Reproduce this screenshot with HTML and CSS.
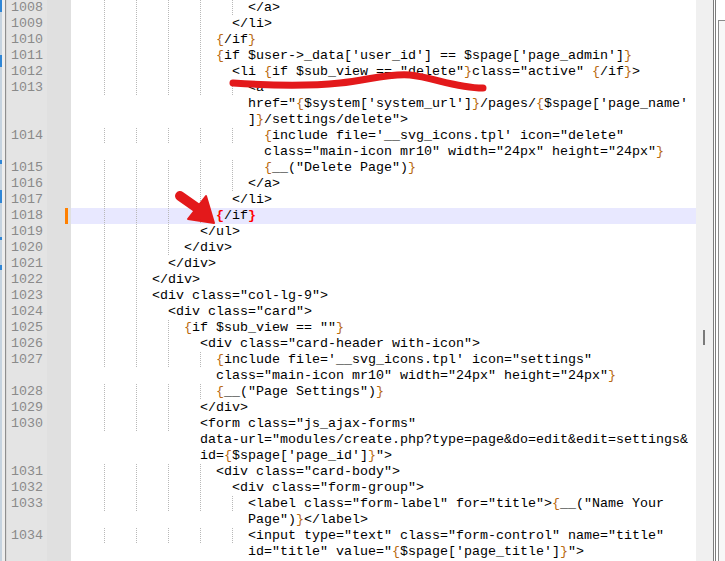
FILE: index.html
```html
<!DOCTYPE html>
<html lang="en">
<head>
    <meta charset="UTF-8">
    <title>page.tpl - Notepad++</title>
    <link rel="stylesheet" href="styles.css">
</head>
<body>
    <div class="window">
        <div class="edge">
            <div class="edge-tabs">
                <span class="tab-on" style="height:12px"></span>
                <span style="height:43px"></span>
                <span class="tab-on" style="height:12px"></span>
                <span style="height:93px"></span>
                <span class="tab-on" style="height:4px"></span>
                <span style="height:26px"></span>
                <span class="tab-on" style="height:13px"></span>
                <span style="height:34px"></span>
                <span class="tab-on" style="height:3px"></span>
                <span style="height:25px"></span>
                <span class="tab-on" style="height:5px"></span>
            </div>
            <div class="edge-gap"></div>
            <div class="edge-line"></div>
            <div class="edge-shadow"></div>
        </div>

        <div class="editor" id="editor"></div>

        <div class="vscroll">
            <div class="thumb"></div>
        </div>

        <div class="side-pane">
            <div class="pane-box"></div>
        </div>

        <!-- red marks drawn on top of the screenshot -->
        <svg class="marks" width="725" height="561" viewBox="0 0 725 561">
            <path d="M233,83 C262,85 302,87 340,83 C368,80 390,73 410,75 C432,77 456,88 483,88"
                  fill="none" stroke="#e3191b" stroke-width="7" stroke-linecap="round"/>
            <line x1="180" y1="196" x2="200" y2="210" stroke="#e3191b" stroke-width="10" stroke-linecap="round"/>
            <polygon points="188,219 206,196 214,223" fill="#e3191b" stroke="#e3191b" stroke-width="2" stroke-linejoin="round"/>
        </svg>
    </div>

    <script>
        // [line number, indent in chars, visual rows, flag]
        const lines = [
            [1008, 22, ['</a>']],
            [1009, 20, ['</li>']],
            [1010, 18, ['{/if}']],
            [1011, 18, ["{if $user->_data['user_id'] == $spage['page_admin']}"]],
            [1012, 20, ['<li {if $sub_view == "delete"}class="active" {/if}>']],
            [1013, 22, ['<a', "href=\"{$system['system_url']}/pages/{$spage['page_name'", ']}/settings/delete">']],
            [1014, 24, ["{include file='__svg_icons.tpl' icon=\"delete\"", 'class="main-icon mr10" width="24px" height="24px"}']],
            [1015, 24, ['{__("Delete Page")}']],
            [1016, 22, ['</a>']],
            [1017, 20, ['</li>']],
            [1018, 18, ['{/if}'], 'current'],
            [1019, 16, ['</ul>']],
            [1020, 14, ['</div>']],
            [1021, 12, ['</div>']],
            [1022, 10, ['</div>']],
            [1023, 10, ['<div class="col-lg-9">']],
            [1024, 12, ['<div class="card">']],
            [1025, 14, ['{if $sub_view == ""}']],
            [1026, 16, ['<div class="card-header with-icon">']],
            [1027, 18, ["{include file='__svg_icons.tpl' icon=\"settings\"", 'class="main-icon mr10" width="24px" height="24px"}']],
            [1028, 18, ['{__("Page Settings")}']],
            [1029, 16, ['</div>']],
            [1030, 16, ['<form class="js_ajax-forms"', 'data-url="modules/create.php?type=page&do=edit&edit=settings&', "id={$spage['page_id']}\">"]],
            [1031, 18, ['<div class="card-body">']],
            [1032, 20, ['<div class="form-group">']],
            [1033, 22, ['<label class="form-label" for="title">{__("Name Your', 'Page")}</label>']],
            [1034, 22, ['<input type="text" class="form-control" name="title"', "id=\"title\" value=\"{$spage['page_title']}\">"]]
        ];

        const CHAR = 8;
        const editor = document.getElementById('editor');

        function span(cls, width) {
            const s = document.createElement('span');
            s.className = cls;
            if (width !== undefined) s.style.width = width + 'px';
            return s;
        }

        // Braces get their own colour, red when matched on the caret line
        function fillText(el, text, current) {
            text.split(/([{}])/).forEach(part => {
                if (!part) return;
                if (part === '{' || part === '}') {
                    const b = span(current ? 'brace match' : 'brace');
                    b.textContent = part;
                    el.append(b);
                } else {
                    el.append(part);
                }
            });
        }

        lines.forEach(([num, indent, rows, flag]) => {
            rows.forEach((text, i) => {
                const row = document.createElement('div');
                row.className = 'row' + (flag ? ' ' + flag : '');

                const n = span('num');
                n.textContent = i === 0 ? num : '';
                row.append(n, span('fold'));

                const code = span('code');
                if (i === 0) {
                    // indent guides at every tab stop before the text
                    code.append(span('indent', Math.min(indent, 4) * CHAR));
                    for (let k = 4; k < indent; k += 4) {
                        code.append(span('indent guide', Math.min(4, indent - k) * CHAR));
                    }
                } else {
                    code.append(span('indent', indent * CHAR));
                }
                fillText(code, text, flag === 'current');
                row.append(code);
                editor.append(row);
            });
        });
    </script>
</body>
</html>
```

FILE: styles.css
```css
body {
    margin: 0;
    background-color: #ffffff;
}
.window {
    display: flex;
    position: relative;
    width: 725px;
    height: 561px;
    overflow: hidden;
    font-family: "Liberation Mono", "Courier New", monospace;
    font-size: 13.33px;
}
.edge {
    display: flex;
    width: 7px;
    flex-shrink: 0;
}
.edge-tabs {
    display: flex;
    flex-direction: column;
    width: 2px;
    background-color: #c6d3df;
}
.edge-tabs span {
    display: block;
}
.edge-tabs .tab-on {
    background-color: #2f86d6;
}
.edge-gap {
    width: 3px;
    background-color: #eeeeee;
}
.edge-line {
    width: 1px;
    background-color: #8e8e8e;
}
.edge-shadow {
    width: 1px;
    background-color: #d8d8d8;
}
.editor {
    width: 689px;
    flex-shrink: 0;
    background: linear-gradient(to right, #e4e4e4 40px, #e0e0e0 40px, #e0e0e0 64px, #ffffff 64px);
}
.row {
    display: grid;
    grid-template-columns: 40px 24px 625px;
    height: 16px;
    line-height: 16px;
}
.num {
    box-sizing: border-box;
    padding-right: 4px;
    text-align: right;
    color: #8a8a8a;
    background-color: #e4e4e4;
}
.fold {
    background-color: #e0e0e0;
}
.row.current .fold {
    background: linear-gradient(to right, #e0e0e0 18px, #ff8000 18px, #ff8000 21px, #e0e0e0 21px);
}
.code {
    padding-left: 1px;
    white-space: pre;
    overflow: hidden;
    color: #000000;
    background-color: #ffffff;
}
.row.current .code {
    background-color: #e8e8ff;
}
.indent {
    display: inline-block;
    height: 16px;
    vertical-align: top;
}
.indent.guide {
    background: linear-gradient(#b8b8b8 50%, transparent 50%) 0 0 / 1px 2px repeat-y;
}
.brace {
    color: #b8690f;
}
.brace.match {
    color: #ff0000;
    font-weight: bold;
}
.vscroll {
    width: 17px;
    flex-shrink: 0;
    padding-top: 330px;
    box-sizing: border-box;
    background-color: #f0f0f0;
}
.thumb {
    width: 2px;
    height: 15px;
    margin-left: 7px;
    background-color: #7a7a7a;
}
.side-pane {
    flex: 1;
    padding-top: 20px;
    border-left: 3px double #7c7c7c;
    background-color: #ffffff;
}
.pane-box {
    height: 100%;
    margin-left: 2px;
    border-top: 1px solid #8a8a8a;
    border-left: 1px solid #8a8a8a;
    background-color: #f7f7f7;
}
.marks {
    position: absolute;
    top: 0;
    left: 0;
    pointer-events: none;
}
```
